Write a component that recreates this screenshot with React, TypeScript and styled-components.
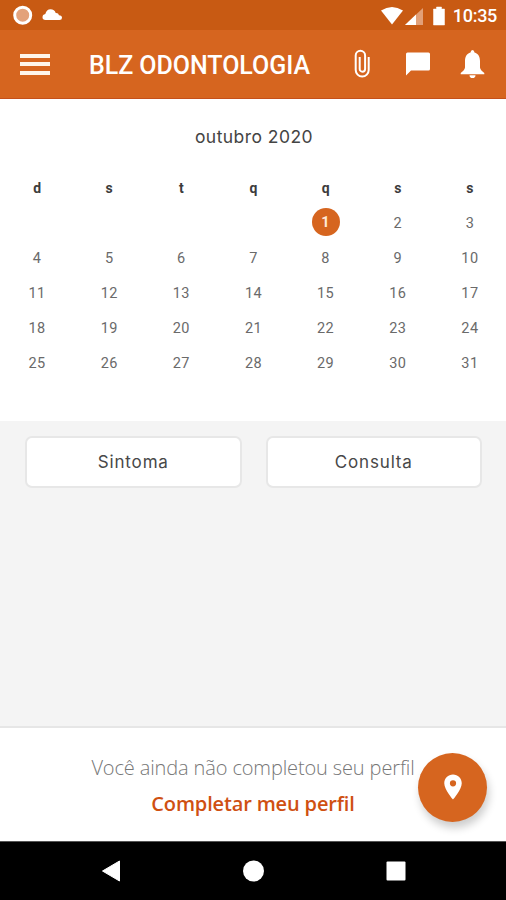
import React from "react";
import styled, { createGlobalStyle, css } from "styled-components";
import { MdLocationOn } from "react-icons/md";

const Global = createGlobalStyle`
  * { box-sizing: border-box; }
  body { margin: 0; background: #fff; }
  button { font: inherit; border: 0; padding: 0; background: none; color: inherit; }
`;

const Screen = styled.div`
  width: 506px;
  height: 900px;
  display: flex;
  flex-direction: column;
  overflow: hidden;
  background: #f4f4f4;
  font-family: Roboto, sans-serif;
`;

const StatusBar = styled.header`
  height: 30px;
  flex: none;
  display: flex;
  align-items: center;
  justify-content: space-between;
  padding: 0 9px 0 12px;
  background: #c85a13;
  color: #fff;
`;

const StatusIcons = styled.svg`
  display: block;
  flex: none;
`;

const StatusRow = styled.div`
  display: flex;
  align-items: center;
  padding-top: 1px;
`;

const Clock = styled.span`
  padding-top: 1px;
  font-size: 18px;
  line-height: 20px;
  font-weight: 500;
  letter-spacing: -0.3px;
`;

const AppBar = styled.nav`
  height: 69px;
  flex: none;
  display: flex;
  align-items: center;
  padding: 0 21px 0 20px;
  background: #d6651f;
  border-bottom: 1px solid #c5501a;
  color: #fff;
`;

const MenuButton = styled.button`
  width: 30px;
  height: 21px;
  display: flex;
  flex-direction: column;
  justify-content: space-between;
`;

const MenuLine = styled.span`
  height: 4px;
  width: 100%;
  background: #fff5ea;
`;

const Title = styled.h1`
  margin: 4px 0 0 39px;
  font-size: 25px;
  line-height: 30px;
  font-weight: 500;
  letter-spacing: -0.05px;
  white-space: nowrap;
`;

const Actions = styled.div`
  margin-left: auto;
  display: flex;
  align-items: center;
`;

const Action = styled.button<{ $w: number; $gap?: number }>`
  width: ${(p) => p.$w}px;
  height: 34px;
  margin-right: ${(p) => p.$gap ?? 0}px;
  display: flex;
  align-items: center;
  justify-content: center;
  svg { flex: none; }
`;

const Calendar = styled.section`
  height: 322px;
  flex: none;
  padding-top: 26px;
  background: #fff;
`;

const Month = styled.h2`
  margin: 0 0 24px;
  height: 24px;
  padding-left: 2px;
  text-align: center;
  font: 400 17.5px/24px Inter, sans-serif;
  letter-spacing: 0.45px;
  color: #444;
`;

const Grid = styled.div`
  display: grid;
  grid-template-columns: repeat(7, 1fr);
  grid-template-rows: 31px repeat(5, 35.2px);
  justify-items: center;
  align-items: center;
  padding-left: 1px;
`;

const Weekday = styled.span`
  height: 30px;
  font-size: 14px;
  line-height: 28px;
  font-weight: 700;
  color: #3c3c3c;
`;

const Day = styled.span<{ $start?: number; $active?: boolean }>`
  width: 28px;
  height: 28px;
  border-radius: 50%;
  text-align: center;
  font-size: 14.5px;
  line-height: 31px;
  letter-spacing: 0.4px;
  color: #6a6a6a;
  ${(p) => p.$start && css`grid-column-start: ${p.$start};`}
  ${(p) => p.$active && css`
    background: #d6651f;
    color: #ffe9d8;
    font-weight: 700;
    line-height: 29px;
  `}
`;

const Body = styled.main`
  flex: 1;
  padding: 15px 24px 0 25px;
  display: grid;
  grid-template-columns: 1fr 1fr;
  align-items: start;
  gap: 24px;
`;

const CardButton = styled.button`
  height: 52px;
  border: 2px solid #e7e7e7;
  border-radius: 7px;
  background: #fff;
  font: 400 17px/47px Inter, sans-serif;
  letter-spacing: 0.85px;
  color: #484848;
`;

const Footer = styled.footer`
  position: relative;
  height: 115px;
  flex: none;
  padding-top: 26px;
  border-top: 2px solid #e6e6e6;
  background: #fff;
  text-align: center;
  font-family: "Open Sans", sans-serif;
`;

const Notice = styled.p`
  margin: 0;
  font-size: 20px;
  line-height: 28px;
  font-weight: 300;
  letter-spacing: -0.13px;
  color: #777;
`;

const ProfileLink = styled.button`
  margin-top: 8px;
  font-size: 20px;
  line-height: 28px;
  font-weight: 600;
  letter-spacing: -0.15px;
  color: #cf5012;
`;

const Fab = styled.button`
  position: absolute;
  right: 19px;
  top: 25px;
  width: 69px;
  height: 69px;
  padding-bottom: 2px;
  border-radius: 50%;
  display: flex;
  align-items: center;
  justify-content: center;
  background: #d6651f;
  color: #fff;
  box-shadow: 2px 6px 9px rgba(0, 0, 0, 0.2);
`;

const SystemNav = styled.div`
  height: 59px;
  flex: none;
  display: flex;
  justify-content: center;
  align-items: center;
  background: #000;
  border-top: 1px solid #555;
`;

const weekdays = ["d", "s", "t", "q", "q", "s", "s"];
const days = Array.from({ length: 31 }, (_, i) => i + 1);

export default function App() {
  return (
    <Screen>
      <Global />
      <StatusBar>
        <StatusIcons width="52" height="30" viewBox="0 0 52 30">
          <circle cx="10.700" cy="15.200" r="8" fill="#e3a27b" stroke="#fff" strokeWidth="3" />
          <path d="M33.500 20Q30.500 20 30.500 17.300Q30.500 14.500 33.300 14Q34.500 9.300 38.500 9.300Q42.500 9.300 43.700 13Q46.500 12.800 47 15.300Q50 15.500 50 17.800Q50 20 47.500 20Z" fill="#fff" />
        </StatusIcons>
        <StatusRow>
          <StatusIcons width="72" height="22" viewBox="0 0 72 22">
            <path d="M0 5.500Q11-1.500 22 5.500L11 19.500Z" fill="#fff" />
            <path d="M42 3V20H24Z" fill="#e2a078" />
            <path d="M35 9.500V20H24Z" fill="#fff" />
            <path d="M52.500 4h3V2h5v2h3v16H52.500Z" fill="#fff" stroke="#fff" strokeWidth=".5" strokeLinejoin="round" />
          </StatusIcons>
          <Clock>10:35</Clock>
        </StatusRow>
      </StatusBar>
      <AppBar>
        <MenuButton aria-label="Menu">
          <MenuLine />
          <MenuLine />
          <MenuLine />
        </MenuButton>
        <Title>BLZ ODONTOLOGIA</Title>
        <Actions>
          <Action $w={18} $gap={34} aria-label="Anexos">
            <svg width="18" height="30" viewBox="0 0 18 30" fill="none" stroke="#fff" strokeWidth="2">
              <path d="M15.700 8V21a6.500 6.500 0 0 1-13 0V6.500a4.700 4.700 0 0 1 9.400 0V20a2.700 2.700 0 0 1-5.400 0V8" />
            </svg>
          </Action>
          <Action $w={26} $gap={29} aria-label="Mensagens">
            <svg width="26" height="26" viewBox="0 0 26 26">
              <path d="M2.500 1.500H23.500Q25 1.500 25 3V18Q25 19.500 23.500 19.500H6L1 24.500V3Q1 1.500 2.500 1.500Z" fill="#fff" />
            </svg>
          </Action>
          <Action $w={25} aria-label="Notificações">
            <svg width="25" height="30" viewBox="0 0 25 30">
              <path d="M12.500 1Q14.300 1 14.500 3.500C18.300 4.600 20 7.700 20 12V18.500Q20.300 21 24.300 24V25.300H.700V24Q4.700 21 5 18.500V12C5 7.700 6.700 4.600 10.500 3.500Q10.700 1 12.500 1ZM9.500 26.200h6a3 2.800 0 0 1-6 0Z" fill="#fff" />
            </svg>
          </Action>
        </Actions>
      </AppBar>
      <Calendar>
        <Month>outubro 2020</Month>
        <Grid>
          {weekdays.map((d, i) => <Weekday key={i}>{d}</Weekday>)}
          {days.map((d) => (
            <Day key={d} $start={d === 1 ? 5 : undefined} $active={d === 1}>{d}</Day>
          ))}
        </Grid>
      </Calendar>
      <Body>
        <CardButton>Sintoma</CardButton>
        <CardButton>Consulta</CardButton>
      </Body>
      <Footer>
        <Notice>Você ainda não completou seu perfil</Notice>
        <ProfileLink>Completar meu perfil</ProfileLink>
        <Fab aria-label="Localização"><MdLocationOn size={30} /></Fab>
      </Footer>
      <SystemNav>
        <svg width="320" height="24" viewBox="0 0 320 24">
          <path d="M9.500 12 26.500 2v20Z" fill="#fff" stroke="#fff" strokeLinejoin="round" />
          <circle cx="160.500" cy="12" r="10.500" fill="#fff" />
          <rect x="293.500" y="2.500" width="19" height="19" rx="1" fill="#fff" />
        </svg>
      </SystemNav>
    </Screen>
  );
}
